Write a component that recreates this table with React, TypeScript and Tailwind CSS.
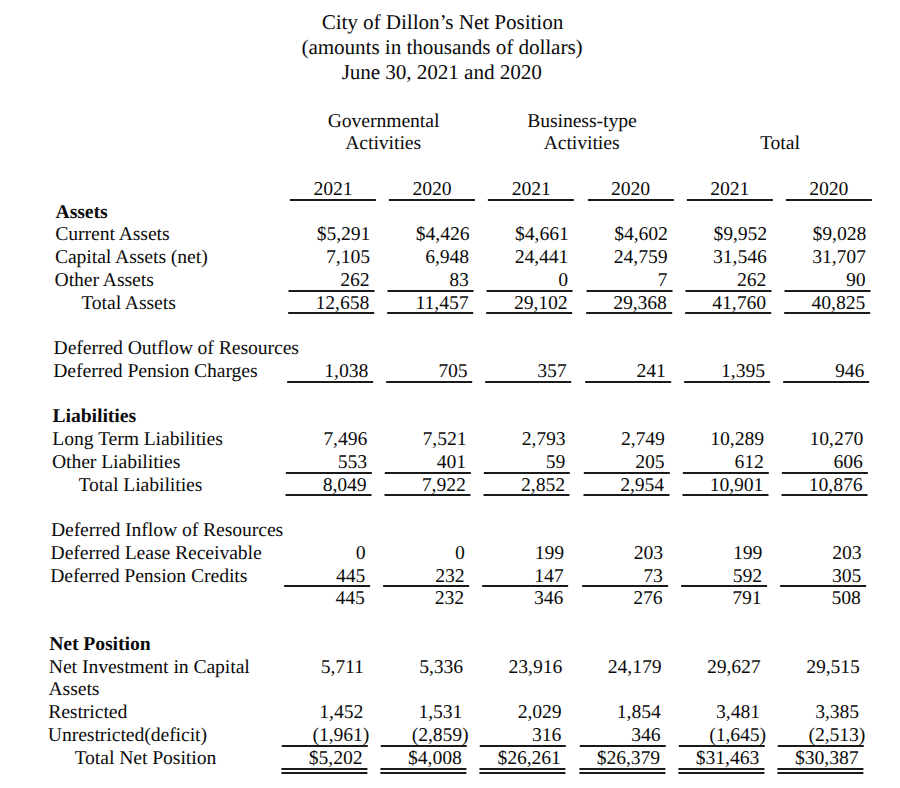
import React from "react";

type Row = {
  label?: string;
  kind?: "bold" | "indent" | "normal";
  values?: string[];
  line?: "single" | "double";
};

const rows: Row[] = [
  { label: "Assets", kind: "bold" },
  { label: "Current Assets", values: ["$5,291", "$4,426", "$4,661", "$4,602", "$9,952", "$9,028"] },
  { label: "Capital Assets (net)", values: ["7,105", "6,948", "24,441", "24,759", "31,546", "31,707"] },
  { label: "Other Assets", values: ["262", "83", "0", "7", "262", "90"], line: "single" },
  { label: "Total Assets", kind: "indent", values: ["12,658", "11,457", "29,102", "29,368", "41,760", "40,825"], line: "single" },
  {},
  { label: "Deferred Outflow of Resources" },
  { label: "Deferred Pension Charges", values: ["1,038", "705", "357", "241", "1,395", "946"], line: "single" },
  {},
  { label: "Liabilities", kind: "bold" },
  { label: "Long Term Liabilities", values: ["7,496", "7,521", "2,793", "2,749", "10,289", "10,270"] },
  { label: "Other Liabilities", values: ["553", "401", "59", "205", "612", "606"], line: "single" },
  { label: "Total Liabilities", kind: "indent", values: ["8,049", "7,922", "2,852", "2,954", "10,901", "10,876"], line: "single" },
  {},
  { label: "Deferred Inflow of Resources" },
  { label: "Deferred Lease Receivable", values: ["0", "0", "199", "203", "199", "203"] },
  { label: "Deferred Pension Credits", values: ["445", "232", "147", "73", "592", "305"], line: "single" },
  { label: "", values: ["445", "232", "346", "276", "791", "508"] },
  {},
  { label: "Net Position", kind: "bold" },
  { label: "Net Investment in Capital", values: ["5,711", "5,336", "23,916", "24,179", "29,627", "29,515"] },
  { label: "Assets" },
  { label: "Restricted", values: ["1,452", "1,531", "2,029", "1,854", "3,481", "3,385"] },
  { label: "Unrestricted(deficit)", values: ["(1,961)", "(2,859)", "316", "346", "(1,645)", "(2,513)"], line: "single" },
  { label: "Total Net Position", kind: "indent", values: ["$5,202", "$4,008", "$26,261", "$26,379", "$31,463", "$30,387"], line: "double" },
];

function Num({ v }: { v: string }) {
  if (v.endsWith(")")) {
    return (
      <>
        {v.slice(0, -1)}
        <span className="mr-[-6.5px]">)</span>
      </>
    );
  }
  return <>{v}</>;
}

export default function App() {
  const years = ["2021", "2020", "2021", "2020", "2021", "2020"];
  return (
    <div
      className="w-[900px] h-[788px] bg-white overflow-hidden text-[#0a0a0a]"
      style={{ fontFamily: '"Liberation Serif", "Times New Roman", serif' }}
    >
      <div className="h-[788px] pt-[9.5px] [transform:skewX(-0.85deg)]">
        <div className="w-[874px] text-center text-[21px] leading-[25px]">
          <div>City of Dillon’s Net Position</div>
          <div>(amounts in thousands of dollars)</div>
          <div>June 30, 2021 and 2020</div>
        </div>

        <div className="ml-[53px] mt-[25px] grid grid-cols-[220.8px_repeat(6,86px)] gap-x-[13.2px] auto-rows-[22.75px] text-[19.5px] leading-[22.75px]">
          {/* header row 1 */}
          <div />
          <div className="col-span-2 text-center">Governmental</div>
          <div className="col-span-2 text-center">Business-type</div>
          <div className="col-span-2" />
          {/* header row 2 */}
          <div />
          <div className="col-span-2 text-center">Activities</div>
          <div className="col-span-2 text-center">Activities</div>
          <div className="col-span-2 text-center">Total</div>
          {/* blank */}
          <div className="col-span-7" />
          {/* years */}
          <div />
          {years.map((y, i) => (
            <div key={i} className="h-[22.75px] text-center border-b-2 border-[#1a1a1a]">
              {y}
            </div>
          ))}

          {rows.map((r, ri) => {
            const labelCls =
              r.kind === "bold"
                ? "font-bold whitespace-nowrap"
                : r.kind === "indent"
                ? "pl-[27px] whitespace-nowrap"
                : "whitespace-nowrap";
            const cellCls =
              r.line === "double"
                ? "h-[27.5px] text-right pr-[5px] whitespace-nowrap border-b-[6px] border-double border-[#1a1a1a]"
                : r.line === "single"
                ? "h-[22.75px] text-right pr-[5px] whitespace-nowrap border-b-2 border-[#1a1a1a]"
                : "h-[22.75px] text-right pr-[5px] whitespace-nowrap";
            return (
              <React.Fragment key={ri}>
                <div className={labelCls}>{r.label ?? ""}</div>
                {[0, 1, 2, 3, 4, 5].map((ci) => (
                  <div key={ci} className={cellCls}>
                    {r.values ? <Num v={r.values[ci]} /> : null}
                  </div>
                ))}
              </React.Fragment>
            );
          })}
        </div>
      </div>
    </div>
  );
}
